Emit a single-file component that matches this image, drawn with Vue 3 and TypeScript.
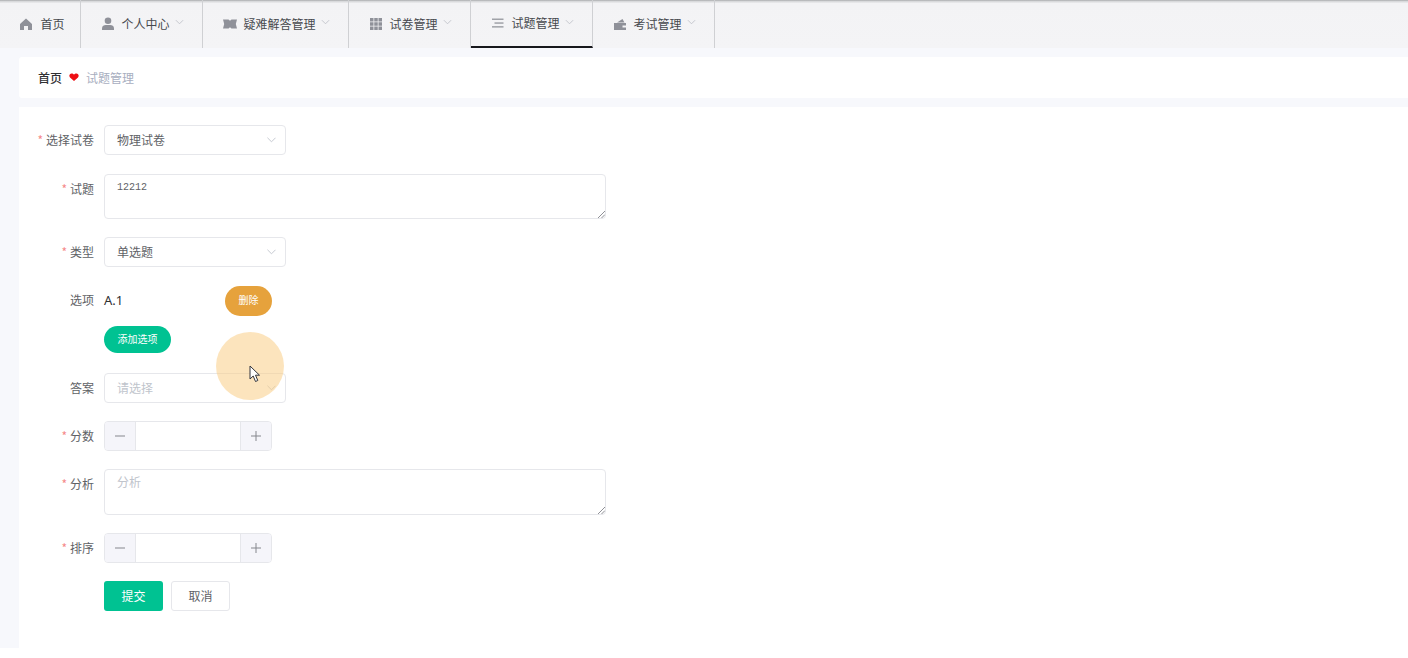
<script setup lang="ts">
interface NavItem { label: string; icon: string; arrow: boolean; active?: boolean; width: number }
const nav: NavItem[] = [
  { label: '首页', icon: 'home', arrow: false, width: 81 },
  { label: '个人中心', icon: 'user', arrow: true, width: 122 },
  { label: '疑难解答管理', icon: 'ticket', arrow: true, width: 146 },
  { label: '试卷管理', icon: 'grid', arrow: true, width: 122 },
  { label: '试题管理', icon: 'list', arrow: true, active: true, width: 122 },
  { label: '考试管理', icon: 'wallet', arrow: true, width: 122 },
]
</script>

<template>
  <div class="page">
    <nav class="nav">
      <div
        v-for="item in nav"
        :key="item.label"
        class="nav-item"
        :class="{ active: item.active }"
        :style="{ width: item.width + 'px' }"
      >
        <svg class="nav-icon" viewBox="0 0 14 14">
          <path v-if="item.icon === 'home'" d="M7 1.500 1 7v6h4V9h4v4h4V7z" fill="#8f9199" />
          <g v-else-if="item.icon === 'user'" fill="#8f9199">
            <circle cx="7" cy="3.800" r="3.300" />
            <path d="M1 13v-1.800C1 9.200 3 8 4.800 8h4.400C11 8 13 9.200 13 11.200V13z" />
          </g>
          <path v-else-if="item.icon === 'ticket'" d="M0 2.500h5.500L7 3.800l1.500-1.300H14L12.800 7 14 11.500H8.500L7 10.200l-1.500 1.300H0L1.200 7z" fill="#8f9199" />
          <g v-else-if="item.icon === 'grid'" fill="#8f9199">
            <rect x="1" y="1" width="3.500" height="3.500" /><rect x="5.250" y="1" width="3.500" height="3.500" /><rect x="9.500" y="1" width="3.500" height="3.500" />
            <rect x="1" y="5.250" width="3.500" height="3.500" /><rect x="5.250" y="5.250" width="3.500" height="3.500" /><rect x="9.500" y="5.250" width="3.500" height="3.500" />
            <rect x="1" y="9.500" width="3.500" height="3.500" /><rect x="5.250" y="9.500" width="3.500" height="3.500" /><rect x="9.500" y="9.500" width="3.500" height="3.500" />
          </g>
          <g v-else-if="item.icon === 'list'" fill="#a0a2a8">
            <rect x="1" y="2.500" width="11.500" height="1.500" /><rect x="3.500" y="6.300" width="9" height="1.500" /><rect x="1" y="10.100" width="11.500" height="1.500" />
          </g>
          <g v-else fill="#8f9199">
            <path d="M1 6h12v7H1z" />
            <path d="M4 5.500 9.500 2l2 3.500z" />
            <rect x="9.500" y="8.500" width="3.500" height="2" fill="#f4f4f6" />
          </g>
        </svg>
        <span class="nav-label">{{ item.label }}</span>
        <svg v-if="item.arrow" class="nav-arrow" viewBox="0 0 10 6"><path d="M1 1l4 4 4-4" fill="none" stroke="#c0c2c9" stroke-width="1" /></svg>
      </div>
    </nav>

    <main class="content">
      <div class="crumb">
        <span class="crumb-home">首页</span>
        <svg class="heart" viewBox="0 0 12 10"><path d="M6 10 1 5.500C-.8 3.500.5.500 3 .500c1.300 0 2.300.6 3 1.500.7-.9 1.700-1.500 3-1.500 2.500 0 3.800 3 2 5z" fill="#ee0f14" /></svg>
        <span class="crumb-current">试题管理</span>
      </div>

      <form class="card" @submit.prevent>
        <div class="row">
          <label class="label"><i>*</i>选择试卷</label>
          <div class="select"><span>物理试卷</span><svg class="chev" viewBox="0 0 10 6"><path d="M.5.500 5 5 9.500.500" /></svg></div>
        </div>
        <div class="row area-row">
          <label class="label"><i>*</i>试题</label>
          <div class="textarea mono">12212<svg class="grip" viewBox="0 0 8 8"><path d="M1 8 8 1M4.500 8 8 4.500" /></svg></div>
        </div>
        <div class="row">
          <label class="label"><i>*</i>类型</label>
          <div class="select"><span>单选题</span><svg class="chev" viewBox="0 0 10 6"><path d="M.5.500 5 5 9.500.500" /></svg></div>
        </div>
        <div class="row option-row">
          <label class="label">选项</label>
          <span class="option-text">A.1</span>
          <button type="button" class="btn-delete">删除</button>
        </div>
        <div class="row add-row">
          <button type="button" class="btn-add">添加选项</button>
        </div>
        <div class="row">
          <label class="label">答案</label>
          <div class="select placeholder"><span>请选择</span><svg class="chev" viewBox="0 0 10 6"><path d="M.5.500 5 5 9.500.500" /></svg></div>
        </div>
        <div class="row">
          <label class="label"><i>*</i>分数</label>
          <div class="number">
            <span class="step"><svg viewBox="0 0 10 10"><path d="M0 5h10" /></svg></span>
            <span class="num-mid"></span>
            <span class="step"><svg viewBox="0 0 10 10"><path d="M0 5h10M5 0v10" /></svg></span>
          </div>
        </div>
        <div class="row">
          <label class="label"><i>*</i>分析</label>
          <div class="textarea placeholder-area">分析<svg class="grip" viewBox="0 0 8 8"><path d="M1 8 8 1M4.500 8 8 4.500" /></svg></div>
        </div>
        <div class="row">
          <label class="label"><i>*</i>排序</label>
          <div class="number">
            <span class="step"><svg viewBox="0 0 10 10"><path d="M0 5h10" /></svg></span>
            <span class="num-mid"></span>
            <span class="step"><svg viewBox="0 0 10 10"><path d="M0 5h10M5 0v10" /></svg></span>
          </div>
        </div>
        <div class="row actions">
          <button type="button" class="btn-submit">提交</button>
          <button type="button" class="btn-cancel">取消</button>
        </div>

        <div class="cursor-halo">
          <svg class="cursor" viewBox="0 0 12 18"><path d="M1 1v13l3.200-3 2.300 5.500 2.300-1-2.300-5.300H10.500z" fill="#fff" stroke="#33353c" stroke-width="1" /></svg>
        </div>
      </form>
    </main>
  </div>
</template>

<style>
html, body { margin: 0; background: #fff; }
</style>

<style scoped>
.page {
  height: 648px;
  overflow: hidden;
  background: #f7f8fc;
  font-family: "Noto Sans CJK SC", "Liberation Sans", sans-serif;
  color: #606266;
}
.nav {
  display: flex;
  height: 48px;
  background: linear-gradient(#a9abad 0, #d9dadc 1.500px, #f3f3f5 3.500px, #f4f4f6 100%);
}
.nav-item {
  box-sizing: border-box;
  height: 48px;
  display: flex;
  align-items: center;
  justify-content: center;
  gap: 6px;
  border-right: 1px solid #cfd0d3;
  font-size: 12px;
  color: #46484d;
  padding: 0 0 1px 2px;
}
.nav-item:first-child { gap: 7px; padding-left: 4px; }
.nav-item.active {
  border-bottom: 2px solid #17181c;
  padding-bottom: 0;
}
.nav-icon { width: 14px; height: 14px; flex: none; }
.nav-label { line-height: 16px; }
.nav-arrow { width: 9px; height: 6px; margin-left: -1px; margin-top: -3px; }

.content {
  margin-left: 19px;
}
.crumb {
  margin-top: 9px;
  height: 41px;
  background: #fff;
  border-radius: 3px 0 0 3px;
  display: flex;
  align-items: center;
  padding: 0 0 1px 19px;
  font-size: 12px;
  box-sizing: border-box;
}
.crumb-home { color: #303133; font-weight: 500; margin-right: -1px; }
.heart { width: 10px; height: 8px; margin: 0 7px 0 8px; }
.crumb-current { color: #a8aec0; }

.card {
  position: relative;
  margin-top: 9px;
  height: 541px;
  background: #fff;
  box-sizing: border-box;
  padding-top: 18px;
  display: flex;
  flex-direction: column;
  gap: 18px;
}
.row { display: flex; align-items: flex-start; padding-left: 85px; position: relative; }
.label {
  position: absolute;
  left: 0;
  width: 75px;
  top: 0;
  height: 30px;
  line-height: 30px;
  text-align: right;
  font-size: 12px;
  color: #606266;
}
.area-row { margin-top: 1px; }
.label i { color: #f58a8a; font-style: normal; margin-right: 3px; }

.select {
  box-sizing: border-box;
  width: 182px;
  height: 30px;
  border: 1px solid #e6e7eb;
  border-radius: 4px;
  display: flex;
  align-items: center;
  justify-content: space-between;
  padding: 0 9px 2px 12px;
  font-size: 12px;
  color: #606266;
  background: #fff;
}
.select.placeholder { color: #c0c4cc; }
.chev { width: 9px; height: 6px; margin-top: 2px; }
.chev path { fill: none; stroke: #c0c4cc; stroke-width: 1; }

.textarea {
  position: relative;
  box-sizing: border-box;
  width: 502px;
  height: 45px;
  border: 1px solid #e6e7eb;
  border-radius: 4px;
  padding: 4px 12px;
  font-size: 12px;
  line-height: 16px;
  background: #fff;
}
.textarea.mono { font-family: "Liberation Mono", monospace; font-size: 10px; color: #606266; padding-top: 5px; }
.placeholder-area { color: #c0c4cc; height: 46px; }
.grip { position: absolute; right: 0; bottom: 0; width: 8px; height: 8px; }
.grip path { fill: none; stroke: #8f9096; stroke-width: 1; }

.option-row { height: 31px; align-items: center; margin-bottom: -8px; }
.option-text { width: 121px; font-size: 13px; color: #303133; font-family: "Noto Sans", sans-serif; margin-top: -2px; }
.btn-delete {
  width: 47px;
  height: 30px;
  border: 0;
  border-radius: 15px;
  background: #e6a23c;
  color: #fff;
  font: inherit;
  font-size: 10px;
  padding: 0 0 2px;
}
.add-row { height: 27px; margin-bottom: 2px; }
.btn-add {
  width: 67px;
  height: 27px;
  border: 0;
  border-radius: 14px;
  background: #00c292;
  color: #fff;
  font: inherit;
  font-size: 10px;
  padding: 0 0 2px;
}
.number {
  box-sizing: border-box;
  display: flex;
  width: 168px;
  height: 30px;
  border: 1px solid #e6e7eb;
  border-radius: 4px;
  overflow: hidden;
  background: #fff;
}
.step {
  width: 30px;
  flex: none;
  background: #f5f5fa;
  display: flex;
  align-items: center;
  justify-content: center;
}
.step svg { width: 10px; height: 10px; }
.step path { fill: none; stroke: #85878d; stroke-width: 1; }
.num-mid { flex: 1; border-left: 1px solid #e6e7eb; border-right: 1px solid #e6e7eb; }

.actions { gap: 8px; }
.btn-submit, .btn-cancel {
  box-sizing: border-box;
  width: 59px;
  height: 30px;
  border-radius: 3px;
  font: inherit;
  font-size: 12px;
  padding: 0 0 2px;
}
.btn-submit { border: 0; background: #00c292; color: #fff; }
.btn-cancel { border: 1px solid #e6e7eb; background: #fff; color: #606266; }

.cursor-halo {
  position: absolute;
  left: 197px;
  top: 225px;
  width: 68px;
  height: 68px;
  border-radius: 50%;
  background: rgba(250, 205, 135, 0.55);
}
.cursor { position: absolute; left: 33px; top: 33px; width: 12px; height: 18px; }
</style>
